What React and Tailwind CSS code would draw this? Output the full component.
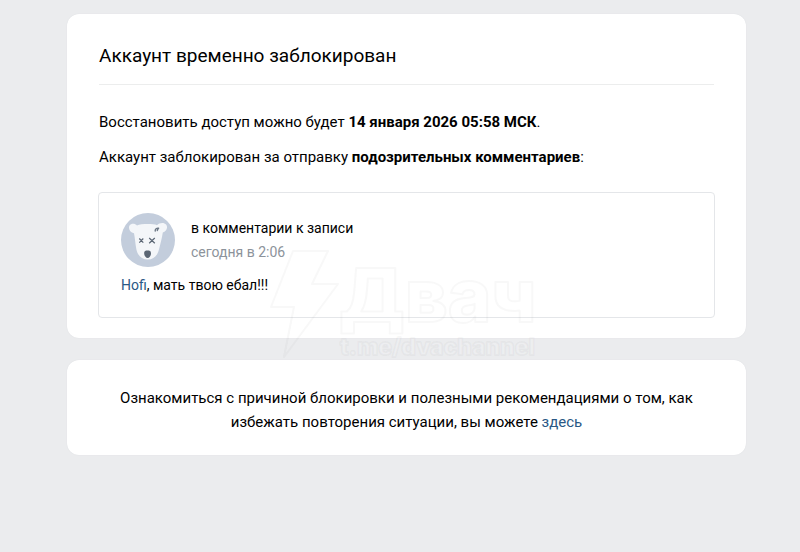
const comment = {
  source: "в комментарии к записи",
  date: "сегодня в 2:06",
  mention: "Hofi",
  text: ", мать твою ебал!!!",
};

function DogAvatar() {
  return (
    <svg viewBox="0 0 54 54" className="w-[54px] h-[54px] shrink-0" aria-hidden="true">
      <circle cx="27" cy="27" r="27" fill="#c3cddc" />
      <path
        d="M16 12.400C20 10.800 32 10.600 36 12.200C38.500 9.500 43 9 45.300 11.700C47.300 15 45 18.800 41.800 19.600C41 25 39.300 32 37.800 37C36.300 43 32.500 46.500 26.800 46.600C20.500 46.600 16.600 42.500 15.300 36C14.200 30 14 25 13 20.200C9 19.500 7 15.500 8.500 12.500C10.300 9.900 14 10.300 16 12.400Z"
        fill="#f4f6f9"
      />
      <path d="M34.200 18C34 15.800 35.600 15 37.600 15.200M36.300 17.500L37.300 15.300" stroke="#6b7684" strokeWidth="1.400" fill="none" strokeLinecap="round" />
      <path d="M18.300 25.500L22.300 29.700M22.300 25.500L18.300 29.700M28.200 25L33.800 30.200M33.800 25L28.200 30.200" stroke="#5b6674" strokeWidth="1.200" fill="none" />
      <path d="M23.100 40C23.100 37.900 24.600 37.500 26.500 37.500C28.500 37.500 30 38 30 40.200C30 42.900 28.500 45 26.700 45C24.700 45 23.100 42.600 23.100 40Z" fill="#5b6674" />
    </svg>
  );
}

function Watermark() {
  return (
    <svg
      viewBox="0 0 280 120"
      className="absolute left-[264px] top-[244px] w-[280px] h-[120px] pointer-events-none"
      fill="none"
      stroke="#808080"
      strokeOpacity="0.06"
      strokeWidth="2"
      strokeLinejoin="round"
      aria-hidden="true"
    >
      <path d="M29 7H64L48 40H74L20 113L30 63H7Z" />
      <g fontFamily="Inter, sans-serif" fontWeight="800">
        <text x="75" y="78" fontSize="74">Двач</text>
        <text x="76" y="111" fontSize="23" fill="#ffffff" fillOpacity="0.15">t.me/dvachannel</text>
      </g>
    </svg>
  );
}

function CommentCard({ data }) {
  return (
    <article className="-mx-px mt-[23px] px-[22px] py-5 border border-[#e4e6e9] rounded-sm text-[14px] leading-6">
      <div className="flex items-center gap-4">
        <DogAvatar />
        <div>
          <p>{data.source}</p>
          <p className="text-[#8c939b]">{data.date}</p>
        </div>
      </div>
      <p className="mt-1.5">
        <a href="#" className="text-[#2a5885]">{data.mention}</a>
        {data.text}
      </p>
    </article>
  );
}

export default function App() {
  return (
    <div className="relative min-h-screen bg-[#ebecee] pt-3.5 pb-8 pl-[67px] pr-[54px] font-['Roboto',sans-serif] text-[15px] leading-6 text-black">
      <main className="flex flex-col gap-[22px]">
        <section className="bg-white rounded-xl px-8 pt-7 pb-5 shadow-[0_0_1px_#d5d7db]">
          <h1 className="text-[19px] leading-7 pb-3.5 border-b border-[#eceded]">Аккаунт временно заблокирован</h1>
          <div className="mt-[25px] flex flex-col gap-[11px]">
            <p>
              Восстановить доступ можно будет <b>14 января 2026 05:58 МСК</b>.
            </p>
            <p>
              Аккаунт заблокирован за отправку <b>подозрительных комментариев</b>:
            </p>
          </div>
          <CommentCard data={comment} />
        </section>

        <section className="bg-white rounded-xl px-12 pt-[26px] pb-[21px] text-center shadow-[0_0_1px_#d5d7db]">
          <p>
            Ознакомиться с причиной блокировки и полезными рекомендациями о том, как избежать повторения ситуации, вы
            можете <a href="#" className="text-[#2a5885]">здесь</a>
          </p>
        </section>
      </main>
      <Watermark />
    </div>
  );
}
